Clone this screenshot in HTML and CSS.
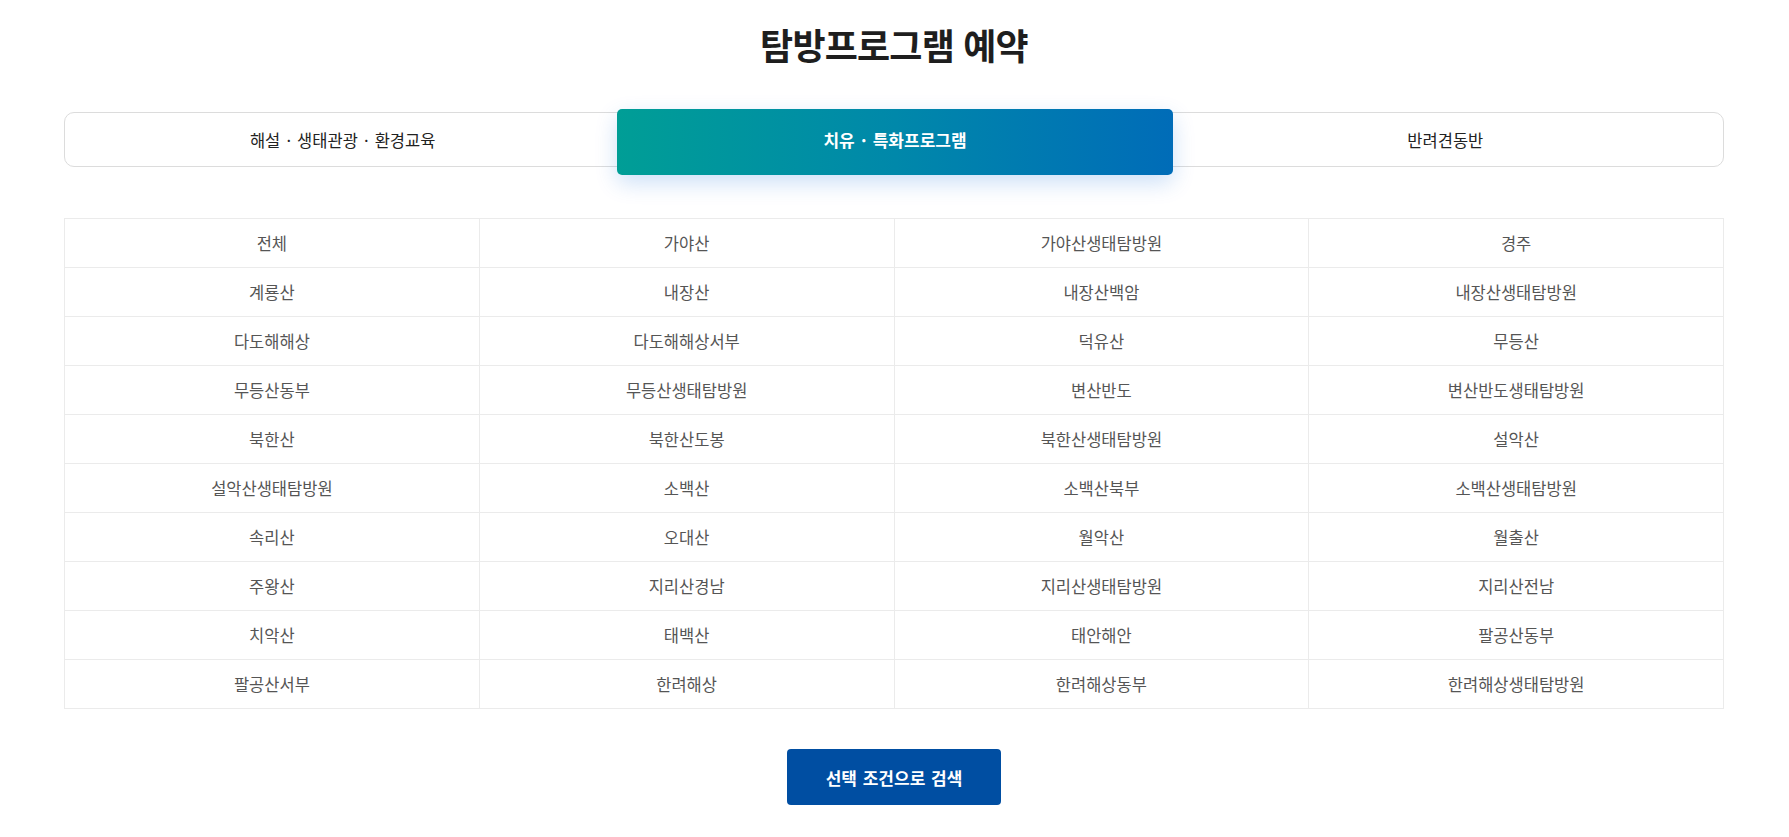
FILE: index.html
```html
<!DOCTYPE html>
<html lang="ko">
<head>
<meta charset="utf-8">
<title>탐방프로그램 예약</title>
<link rel="stylesheet" href="styles.css">
</head>
<body>
<div class="page">
  <h1 class="title">탐방프로그램 예약</h1>
  <div class="tabs">
    <button class="tab">해설 · 생태관광 · 환경교육</button>
    <button class="tab tab-active">치유 · 특화프로그램</button>
    <button class="tab">반려견동반</button>
  </div>
  <div class="grid">
    <div class="cell">전체</div><div class="cell">가야산</div><div class="cell">가야산생태탐방원</div><div class="cell">경주</div>
    <div class="cell">계룡산</div><div class="cell">내장산</div><div class="cell">내장산백암</div><div class="cell">내장산생태탐방원</div>
    <div class="cell">다도해해상</div><div class="cell">다도해해상서부</div><div class="cell">덕유산</div><div class="cell">무등산</div>
    <div class="cell">무등산동부</div><div class="cell">무등산생태탐방원</div><div class="cell">변산반도</div><div class="cell">변산반도생태탐방원</div>
    <div class="cell">북한산</div><div class="cell">북한산도봉</div><div class="cell">북한산생태탐방원</div><div class="cell">설악산</div>
    <div class="cell">설악산생태탐방원</div><div class="cell">소백산</div><div class="cell">소백산북부</div><div class="cell">소백산생태탐방원</div>
    <div class="cell">속리산</div><div class="cell">오대산</div><div class="cell">월악산</div><div class="cell">월출산</div>
    <div class="cell">주왕산</div><div class="cell">지리산경남</div><div class="cell">지리산생태탐방원</div><div class="cell">지리산전남</div>
    <div class="cell">치악산</div><div class="cell">태백산</div><div class="cell">태안해안</div><div class="cell">팔공산동부</div>
    <div class="cell">팔공산서부</div><div class="cell">한려해상</div><div class="cell">한려해상동부</div><div class="cell">한려해상생태탐방원</div>
  </div>
  <div class="actions">
    <button class="search">선택 조건으로 검색</button>
  </div>
</div>
</body>
</html>
```

FILE: styles.css
```css
* { box-sizing: border-box; }
html, body { margin: 0; padding: 0; background: #fff; }
body {
  font-family: "Noto Sans CJK KR", "Noto Sans", sans-serif;
  color: #222;
}
.page {
  padding: 19px 65px 0 64px;
}
.title {
  margin: 0;
  text-align: center;
  font-size: 36px;
  line-height: 50px;
  font-weight: 700;
  color: #1e1e1e;
  letter-spacing: -0.8px;
}
.tabs {
  margin-top: 43px;
  display: flex;
  height: 55px;
  border: 1px solid #dcdcdc;
  border-radius: 10px;
  background: #fff;
}
.tab {
  flex: 1;
  border: 0;
  background: transparent;
  font-family: inherit;
  font-size: 16.5px;
  word-spacing: 1.5px;
  color: #222;
  padding: 0;
  cursor: pointer;
}
.tab-active {
  margin: -4px -5px -9px -3px;
  border-radius: 5px;
  background: linear-gradient(90deg, #009e96 0%, #0088aa 50%, #006cb8 100%);
  color: #fff;
  font-weight: 700;
  font-size: 17px;
  box-shadow: 0 8px 22px rgba(0, 100, 220, 0.2);
  position: relative;
  z-index: 1;
  padding-bottom: 5px;
}
.grid {
  margin-top: 51px;
  display: grid;
  grid-template-columns: repeat(4, 1fr);
  border-top: 1px solid #ebebeb;
  border-left: 1px solid #ebebeb;
}
.cell {
  height: 49px;
  display: flex;
  align-items: center;
  justify-content: center;
  border-right: 1px solid #ebebeb;
  border-bottom: 1px solid #ebebeb;
  font-size: 16.5px;
  color: #555;
}
.actions {
  margin-top: 40px;
  display: flex;
  justify-content: center;
}
.search {
  width: 214px;
  height: 56px;
  border: 0;
  border-radius: 4px;
  background: #004ea2;
  color: #fff;
  font-family: inherit;
  font-size: 17px;
  font-weight: 700;
  word-spacing: 1px;
  cursor: pointer;
}
```
